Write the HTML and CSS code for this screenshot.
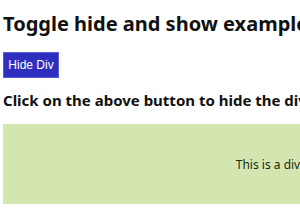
FILE: index.html
```html
<!DOCTYPE html>
<html lang="en">
<head>
    <meta charset="UTF-8">
    <title>Toggle hide and show</title>
    <link rel="stylesheet" href="styles.css">
</head>
<body>
<div class="page">
    <h1 class="title">Toggle hide and show example</h1>
    <button class="toggle_btn" id="toggleBtn">Hide Div</button>
    <h3 class="hint">Click on the above button to hide the div</h3>
    <div class="box" id="box">
        <span>This is a div</span>
    </div>
</div>
</body>
</html>
```
FILE: styles.css
```css
*{
    padding:0;
    margin:0;
}
body {
    overflow: hidden;
    font-family: "Noto Sans", "Open Sans", sans-serif;
    color: #111;
}
.page {
    padding: 11px 0 0 3px;
    width: 540px;
}
.page .title {
    font-size: 20px;
    line-height: 25px;
    font-weight: bold;
    white-space: nowrap;
}
.page .toggle_btn {
    display: block;
    margin-top: 16px;
    width: 56px;
    height: 26px;
    background: #2f2fbf;
    border: 1px solid #5a5ad8;
    color: #fff;
    font-family: "Liberation Sans", Arial, sans-serif;
    font-size: 12px;
}
.page .hint {
    margin-top: 12px;
    font-size: 15px;
    line-height: 21px;
    font-weight: bold;
    white-space: nowrap;
}
.page .box {
    display: flex;
    align-items: center;
    justify-content: center;
    margin-top: 13px;
    width: 530px;
    height: 80px;
    background: #d4e6b0;
    font-size: 12px;
    color: #1d2a14;
}
```
